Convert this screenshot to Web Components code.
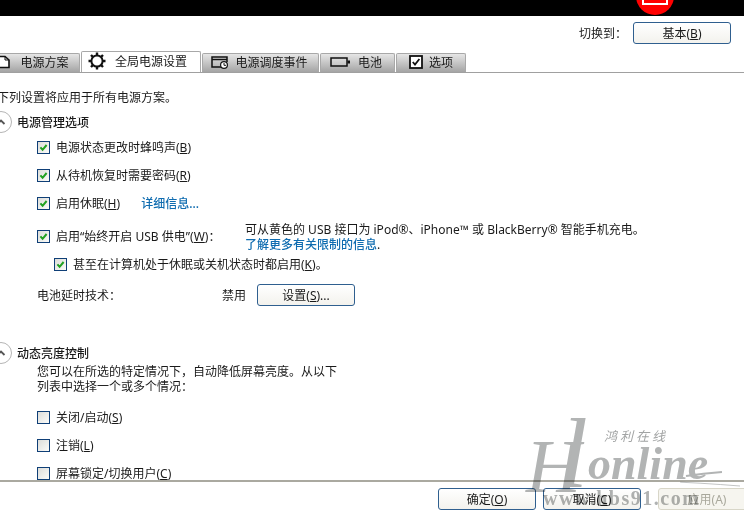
<!DOCTYPE html>
<html lang="zh">
<head>
<meta charset="utf-8">
<style>
  html, body { margin: 0; height: 100%; background: #fff; overflow: hidden; }
  body { font-family: "Noto Sans", "Noto Sans CJK SC", sans-serif; font-size: 12px; color: #1a1a1a; }
</style>
</head>
<body>
<ui-power-window>
  <ui-tab-bar slot="tabs">
    <ui-tab icon="plan">电源方案</ui-tab>
    <ui-tab icon="gear" active>全局电源设置</ui-tab>
    <ui-tab icon="clock">电源调度事件</ui-tab>
    <ui-tab icon="battery">电池</ui-tab>
    <ui-tab icon="check">选项</ui-tab>
  </ui-tab-bar>
  <ui-global-settings></ui-global-settings>
</ui-power-window>

<script>
const ICONS = {
  plan: `<svg width="14" height="14" viewBox="2 0 14 14"><path d="M-3 1.5H7L11 5V12.5H-3" fill="#fff" stroke="#111" stroke-width="1.6"/><path d="M7 1.5V5H11" fill="none" stroke="#111"/></svg>`,
  gear: `<svg width="20" height="20" viewBox="0 0 20 20"><circle cx="10" cy="10" r="5.6" fill="#fff" stroke="#111" stroke-width="2"/><path d="M10 1.5V4.5M10 15.5V18.5M1.5 10H4.5M15.5 10H18.5M4 4L6 6M14 14L16 16M16 4L14 6M6 14L4 16" stroke="#111" stroke-width="2.4"/></svg>`,
  clock: `<svg width="18" height="14" viewBox="0 0 18 14"><path d="M11 12H1V2H16V7" fill="none" stroke="#111" stroke-width="1.5"/><path d="M1 4.5H16" stroke="#111" stroke-width="1.5"/><circle cx="13" cy="10" r="3.4" fill="#fff" stroke="#111" stroke-width="1.2"/><path d="M13 8V10.3H15" fill="none" stroke="#111"/></svg>`,
  battery: `<svg width="22" height="12" viewBox="0 0 22 12"><rect x="1" y="2" width="16" height="8" fill="#fff" fill-opacity=".15" stroke="#111" stroke-width="1.5"/><rect x="17.5" y="4.5" width="2.5" height="3" fill="#111"/></svg>`,
  check: `<svg width="14" height="14" viewBox="0 0 14 14"><rect x="1" y="1" width="12" height="12" fill="#fff" stroke="#111" stroke-width="1.8"/><path d="M3.8 7L6 9.6L10.4 4" fill="none" stroke="#111" stroke-width="1.8"/></svg>`
};

function define(name, html, init) {
  customElements.define(name, class extends HTMLElement {
    constructor() {
      super();
      this.attachShadow({ mode: 'open' });
    }
    connectedCallback() {
      this.shadowRoot.innerHTML = typeof html === 'function' ? html(this) : html;
      if (init) init(this);
    }
  });
}

// accelerator letters are underlined, e.g. (B)
define('ui-key', `<style>:host { text-decoration: underline; text-underline-offset: 1px; }</style><slot></slot>`);

define('ui-button', el => `
  <style>
    :host { display: inline-flex; width: 98px; height: 22px; box-sizing: border-box; align-items: center; justify-content: center;
      border: 1px solid ${el.hasAttribute('disabled') ? '#d8d6c8' : '#2f5f8f'}; border-radius: 3px;
      background: ${el.hasAttribute('disabled') ? '#f6f5ef' : 'linear-gradient(#fff, #f3f2ed)'};
      color: ${el.hasAttribute('disabled') ? '#a9a89c' : '#1a1a1a'}; flex: none; }
  </style><slot></slot>`);

define('ui-check', el => `
  <style>
    :host { display: flex; align-items: center; gap: 6px; height: 14px; }
    .box { width: 11px; height: 11px; border: 1px solid #0f3f77; background: linear-gradient(135deg, #dcddd9, #fbfbf9); flex: none; }
    svg { display: block; width: 11px; height: 11px; }
  </style>
  <div class="box">${el.hasAttribute('checked') ? '<svg viewBox="0 0 11 11"><path d="M2.4 5.4L4.6 7.8L8.6 3" fill="none" stroke="#21a121" stroke-width="2"/></svg>' : ''}</div>
  <span><slot></slot></span>`);

define('ui-section-head', `
  <style>
    :host { display: flex; align-items: center; gap: 5px; height: 22px; font-weight: 500; }
    .toggle { width: 20px; height: 20px; border: 1px solid #b5b5b5; border-radius: 50%; background: #fff; flex: none; display: flex; align-items: center; justify-content: center; }
  </style>
  <div class="toggle"><svg width="10" height="8" viewBox="0 0 10 8"><path d="M1.5 6L5 2.5L8.5 6" fill="none" stroke="#555" stroke-width="1.8"/></svg></div>
  <span><slot></slot></span>`);

define('ui-tab', el => `
  <style>
    :host { display: flex; align-items: center; justify-content: center; gap: 6px; box-sizing: border-box; height: 19px; padding-bottom: 3px;
      background: linear-gradient(#e6e6e6, #a4a4a4); border: 1px solid #a8a8a8; border-bottom: 0; border-radius: 2px 2px 0 0; color: #1a1a1a; }
    :host([active]) { height: 21px; padding: 0 8px 2px 0; background: #fff; border-color: #a8a8a8; gap: 8px; }
  </style>
  ${ICONS[el.getAttribute('icon')]}<span><slot></slot></span>`);

define('ui-tab-bar', `
  <style>
    :host { display: flex; align-items: flex-end; gap: 1px; height: 21px; margin-left: -8px; border-bottom: 1px solid #a0a0a0; }
    ::slotted(:nth-child(1)) { width: 88px; padding-right: 3px; }
    ::slotted(:nth-child(2)) { width: 120px; }
    ::slotted(:nth-child(3)) { width: 117px; padding-right: 2px; }
    ::slotted(:nth-child(4)) { width: 75px; padding-right: 3px; }
    ::slotted(:nth-child(5)) { width: 70px; }
  </style><slot></slot>`);

// scanned signature over the corner of the window, lies above the buttons
define('ui-watermark', `
  <style>
    :host { position: absolute; left: 0; top: 0; width: 744px; height: 526px; pointer-events: none; color: #b2b4b4; overflow: hidden; mix-blend-mode: multiply; }
    div { position: absolute; white-space: nowrap; font-family: "Liberation Serif", serif; font-style: italic; font-weight: 400; }
    .h { left: 526px; top: 428px; font-size: 76px; line-height: 76px; }
    .l { left: 560px; top: 404px; font-size: 100px; line-height: 100px; }
    .online { left: 588px; top: 436px; font-size: 46px; line-height: 56px; font-weight: 700; }
    .cn { left: 604px; top: 428px; font: italic 400 13px/16px "Noto Sans CJK SC", sans-serif; letter-spacing: 3px; color: #a2a4a4; }
    .url { left: 543px; top: 487px; font: 700 20px/22px "Liberation Serif", serif; letter-spacing: 1.5px; color: #b0b2b2; }
    svg { position: absolute; left: 680px; top: 462px; }
  </style>
  <div class="h">H</div>
  <div class="l">l</div>
  <div class="online">online</div>
  <svg width="64" height="30" viewBox="0 0 64 30"><path d="M6 14C20 12 30 11 42 10" fill="none" stroke="#b2b4b4" stroke-width="2"/><path d="M-100 20C-50 17 10 20 60 24" fill="none" stroke="#c2c4c4" stroke-width="1"/></svg>
  <div class="cn">鸿利在线</div>
  <div class="url">www.hbs91.com</div>`);

define('ui-global-settings', `
  <style>
    :host { display: flex; flex-direction: column; padding-left: 37px; }
    .intro { margin: 17px 0 0 -40px; line-height: 16px; height: 16px; white-space: nowrap; }
    ui-section-head { margin-left: -47px; }
    .first { margin-top: 7px; }
    .row { display: flex; align-items: center; height: 14px; }
    .link { color: #0f6cb0; font-weight: 500; }
    .more { margin-left: 21px; }
    .gap28 { margin-top: 14px; }
    .usb { display: flex; align-items: flex-start; margin-top: 12px; height: 30px; }
    .usb ui-check { margin-top: 7px; width: 208px; flex: none; }
    .usb p { margin: 0; line-height: 15px; white-space: nowrap; }
    .nested { margin: 5px 0 0 17px; }
    .battery { display: flex; align-items: center; margin-top: 13px; height: 22px; }
    .battery .label { width: 185px; }
    .battery .state { width: 35px; }
    .section2 { margin-top: 36px; }
    .desc { margin: 0; width: 304px; line-height: 15px; }
    .opt1 { margin-top: 16px; }
    .opt { margin-top: 14px; }
  </style>
  <p class="intro">下列设置将应用于所有电源方案。</p>
  <ui-section-head style="margin-top:5px">电源管理选项</ui-section-head>
  <ui-check class="first" checked>电源状态更改时蜂鸣声(<ui-key>B</ui-key>)</ui-check>
  <ui-check class="gap28" checked>从待机恢复时需要密码(<ui-key>R</ui-key>)</ui-check>
  <div class="row gap28">
    <ui-check checked>启用休眠(<ui-key>H</ui-key>)</ui-check>
    <span class="link more">详细信息...</span>
  </div>
  <div class="usb">
    <ui-check checked>启用“始终开启 USB 供电”(<ui-key>W</ui-key>)：</ui-check>
    <p>可从黄色的 USB 接口为 iPod®、iPhone™ 或 BlackBerry® 智能手机充电。<br><span class="link">了解更多有关限制的信息</span>.</p>
  </div>
  <ui-check class="nested" checked>甚至在计算机处于休眠或关机状态时都启用(<ui-key>K</ui-key>)。</ui-check>
  <div class="battery">
    <span class="label">电池延时技术：</span><span class="state">禁用</span>
    <ui-button>设置(<ui-key>S</ui-key>)...</ui-button>
  </div>
  <ui-section-head class="section2">动态亮度控制</ui-section-head>
  <p class="desc">您可以在所选的特定情况下，自动降低屏幕亮度。从以下列表中选择一个或多个情况：</p>
  <ui-check class="opt1">关闭/启动(<ui-key>S</ui-key>)</ui-check>
  <ui-check class="opt">注销(<ui-key>L</ui-key>)</ui-check>
  <ui-check class="opt">屏幕锁定/切换用户(<ui-key>C</ui-key>)</ui-check>`);

define('ui-power-window', `
  <style>
    :host { display: flex; flex-direction: column; height: 526px; width: 744px; position: relative; overflow: hidden; background: #fff; }
    .top { height: 16px; background: #000; flex: none; position: relative; overflow: hidden; }
    .badge { position: absolute; left: 636px; top: -23px; width: 38px; height: 38px; border-radius: 50%; background: #f00; }
    .badge i { position: absolute; left: 6px; top: 11px; width: 22px; height: 13px; border: 2px solid #fff; background: #f00; }
    .switch { display: flex; justify-content: flex-end; align-items: center; gap: 6px; height: 22px; margin-top: 6px; padding-right: 13px; flex: none; }
    .tabs { margin-top: 7px; flex: none; }
    .scroll { flex: 1; overflow: hidden; min-height: 0; }
    .foot { height: 46px; flex: none; box-sizing: border-box; border-top: 2px solid #aaa9a0; display: flex; gap: 7px; padding: 6px 0 0 438px; overflow: hidden; }
    .apply { margin-left: 10px; }
  </style>
  <div class="top"><div class="badge"><i></i></div></div>
  <div class="switch"><span>切换到：</span><ui-button>基本(<ui-key>B</ui-key>)</ui-button></div>
  <div class="tabs"><slot name="tabs"></slot></div>
  <div class="scroll"><slot></slot></div>
  <div class="foot">
    <ui-button>确定(<ui-key>O</ui-key>)</ui-button>
    <ui-button>取消(<ui-key>C</ui-key>)</ui-button>
    <ui-button class="apply" disabled>应用(A)</ui-button>
  </div>
  <ui-watermark></ui-watermark>`);
</script>
</body>
</html>
